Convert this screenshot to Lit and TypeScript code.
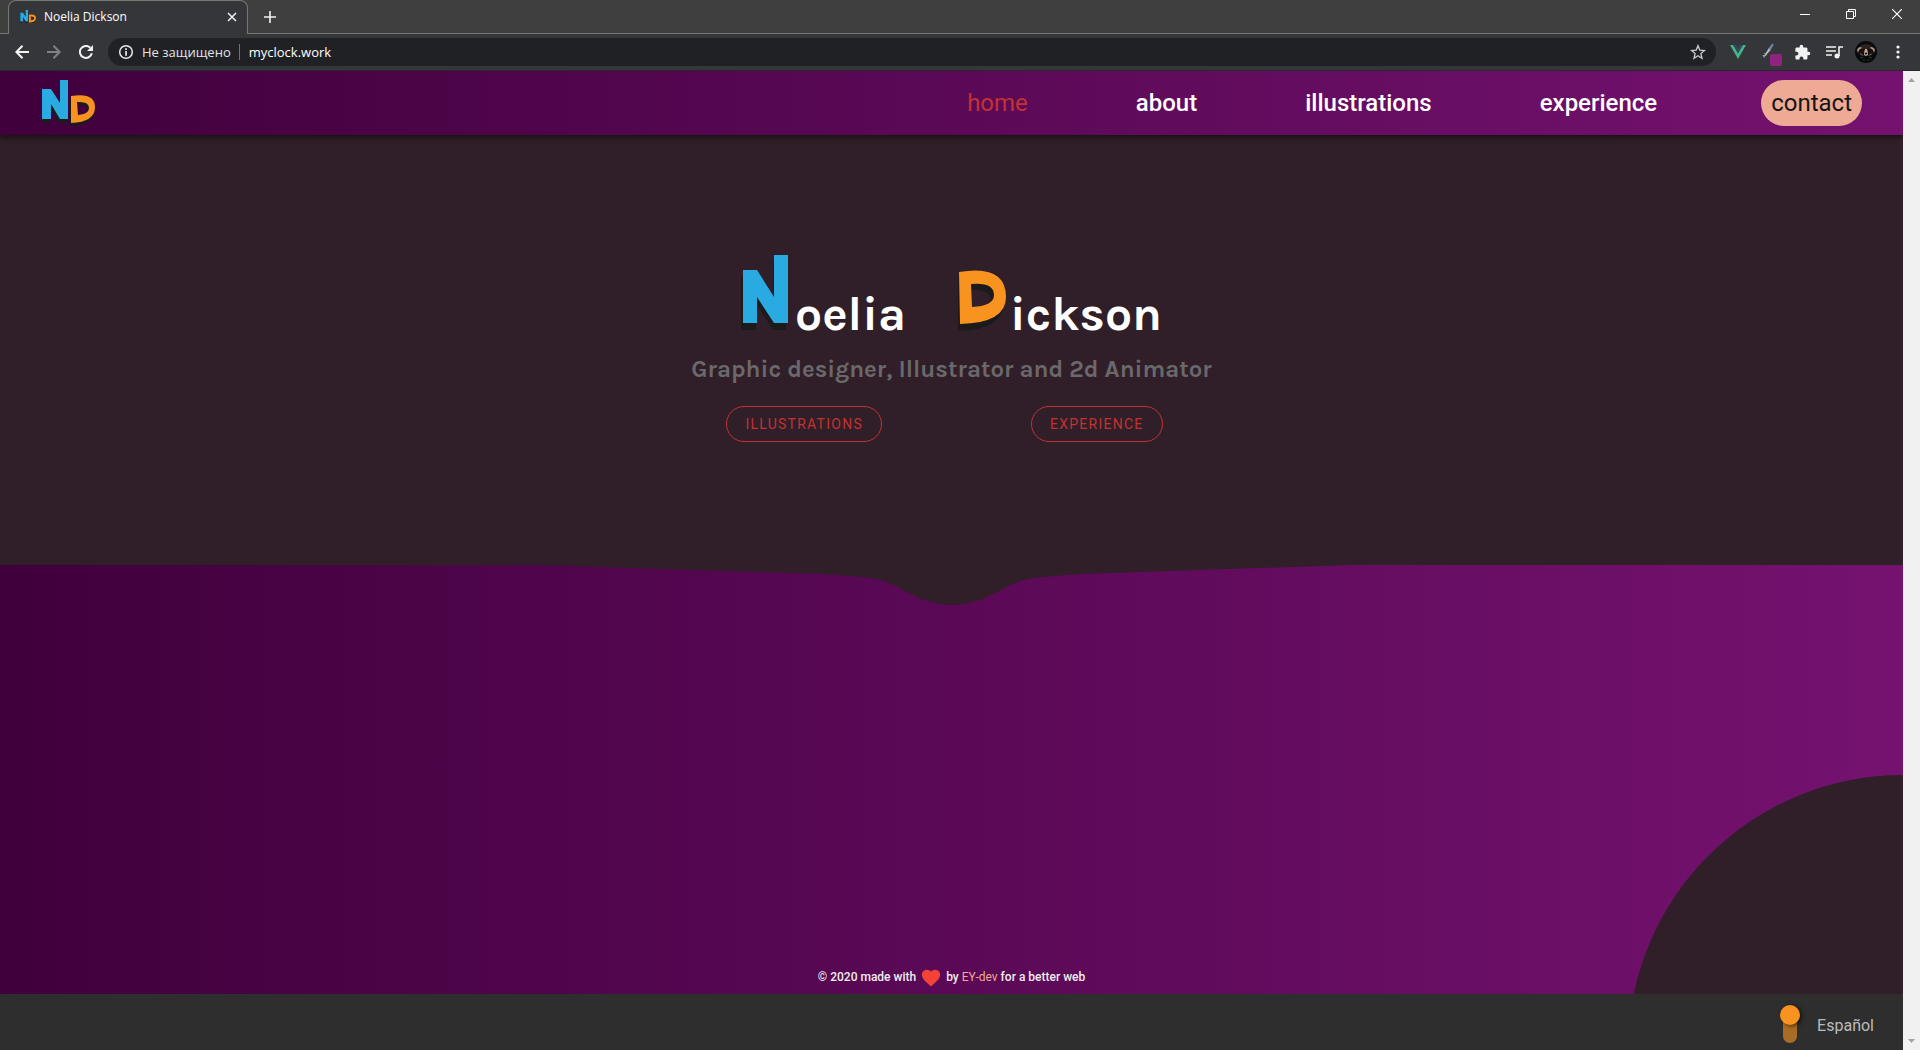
import { LitElement, html, css } from "lit";
import { customElement, property, state } from "lit/decorators.js";

@customElement("browser-chrome")
export class BrowserChrome extends LitElement {
  static styles = css`
    :host {
      display: block;
      font-family: "Open Sans", "Noto Sans", sans-serif;
      color: #fff;
    }
    button {
      border: 0;
      padding: 0;
      background: none;
      color: inherit;
      display: flex;
      align-items: center;
      justify-content: center;
    }
    svg {
      display: block;
    }
    .tabs {
      height: 34px;
      background: #3f3f3f;
      border-bottom: 1px solid #747873;
      box-sizing: border-box;
      display: flex;
      align-items: stretch;
      padding-left: 8px;
    }
    .tab {
      box-sizing: border-box;
      width: 240px;
      height: 34px;
      background: #35363a;
      border: 1px solid #747873;
      border-bottom: 0;
      border-radius: 8px 8px 0 0;
      display: flex;
      align-items: center;
      gap: 8px;
      padding: 0 10px 2px 11px;
      font-size: 12px;
    }
    .title {
      flex: 1;
    }
    .add {
      width: 44px;
    }
    .window {
      margin-left: auto;
      display: flex;
      height: 28px;
    }
    .window button {
      width: 46px;
    }
    .bar {
      height: 37px;
      box-sizing: border-box;
      background: #35363a;
      border-bottom: 1px solid #27282b;
      display: flex;
      align-items: center;
      padding: 0 6px;
    }
    .nav {
      width: 32px;
      height: 32px;
    }
    .address {
      flex: 1;
      height: 28px;
      margin: 0 6px;
      border-radius: 14px;
      background: #202124;
      display: flex;
      align-items: center;
      padding: 0 10px;
      font-size: 13px;
    }
    .secure {
      color: #e3e4e6;
      margin-left: 8px;
    }
    .rule {
      width: 1px;
      height: 16px;
      background: #707276;
      margin: 0 9px 0 8px;
    }
    .url {
      flex: 1;
      min-width: 0;
      border: 0;
      padding: 0;
      outline: 0;
      background: none;
      color: #fff;
      font: inherit;
    }
    .ext {
      width: 32px;
      height: 32px;
    }
  `;

  render() {
    return html`
      <div class="tabs">
        <div class="tab">
          <nd-logo size="16"></nd-logo>
          <span class="title">Noelia Dickson</span>
          <button aria-label="Close tab">
            <svg width="10" height="10" viewBox="0 0 10 10"><path d="M1 1l8 8M9 1l-8 8" stroke="#f1f3f4" stroke-width="1.500" /></svg>
          </button>
        </div>
        <button class="add" aria-label="New tab">
          <svg width="12" height="12" viewBox="0 0 12 12"><path d="M6 0v12M0 6h12" stroke="#f1f3f4" stroke-width="1.600" /></svg>
        </button>
        <div class="window">
          <button aria-label="Minimize"><svg width="10" height="10"><path d="M0 5.500h10" stroke="#fff" /></svg></button>
          <button aria-label="Restore">
            <svg width="10" height="10" fill="none" stroke="#fff"><path d="M.5 2.500h7v7h-7zM2.500 2V.5h7v7H8" /></svg>
          </button>
          <button aria-label="Close"><svg width="10" height="10"><path d="M0 0l10 10M10 0L0 10" stroke="#fff" stroke-width="1.200" /></svg></button>
        </div>
      </div>
      <div class="bar">
        <button class="nav" aria-label="Back">
          <svg width="14" height="14" viewBox="0 0 14 14" fill="none" stroke="#f1f3f4" stroke-width="2"><path d="M14 7H1.500M7.500.7L1.400 7l6.100 6.300" /></svg>
        </button>
        <button class="nav" aria-label="Forward">
          <svg width="14" height="14" viewBox="0 0 14 14" fill="none" stroke="#808185" stroke-width="2"><path d="M0 7h12.500M6.500.7L12.600 7l-6.100 6.300" /></svg>
        </button>
        <button class="nav" aria-label="Reload">
          <svg width="14" height="14" viewBox="0 0 14 14"><path d="M12.800 8.200A6 6 0 1 1 11.200 2.700" fill="none" stroke="#f1f3f4" stroke-width="2" /><path d="M14 0v6H8z" fill="#f1f3f4" /></svg>
        </button>
        <div class="address">
          <svg width="16" height="16" viewBox="0 0 16 16"><circle cx="8" cy="8" r="6.300" fill="none" stroke="#e8eaed" stroke-width="1.500" /><path d="M7.200 4.300h1.700V6H7.200zM7.200 7h1.700v4.700H7.200z" fill="#e8eaed" /></svg>
          <label class="secure" for="url">Не защищено</label>
          <span class="rule"></span>
          <input class="url" id="url" value="myclock.work" />
          <button aria-label="Bookmark">
            <svg width="16" height="16" viewBox="0 0 24 24"><path d="M12 2.500l2.700 6.600 7.100.6-5.400 4.700 1.600 7-6-3.700-6 3.700 1.600-7-5.400-4.700 7.100-.6z" fill="none" stroke="#c9cbce" stroke-width="2" /></svg>
          </button>
        </div>
        <button class="ext" aria-label="Vue devtools">
          <svg width="16" height="14" viewBox="0 0 16 14"><path d="M0 0h3.200L8 8.300 12.800 0H16L8 14z" fill="#41b883" /><path d="M3.200 0h3L8 3.200 9.800 0h3L8 8.300z" fill="#35495e" /></svg>
        </button>
        <button class="ext" aria-label="Color picker">
          <svg width="24" height="28" viewBox="0 0 24 28"><path d="M5.500 18.500L11 10l2 1.400L7 18.300z" fill="#b6c7d1" /><path d="M10 11l4.300-5.500 1.400 1-3.400 6z" fill="#7389a0" /><path d="M5 17l1.500 2.500" stroke="#7fd0d8" /><path d="M6.500 15.500l2 1.500" stroke="#e4b36a" /><rect x="12" y="16" width="12" height="12" rx="2" fill="#8e247f" /></svg>
        </button>
        <button class="ext" aria-label="Extensions">
          <svg width="17" height="17" viewBox="0 0 24 24"><path fill="#f1f3f4" d="M20.500 11H19V7c0-1.100-.9-2-2-2h-4V3.500a2.500 2.500 0 0 0-5 0V5H4c-1.100 0-2 .9-2 2v3.800h1.500a2.700 2.700 0 0 1 0 5.400H2V20c0 1.100.9 2 2 2h3.800v-1.500a2.700 2.700 0 0 1 5.400 0V22H17c1.100 0 2-.9 2-2v-4h1.500a2.500 2.500 0 0 0 0-5z" /></svg>
        </button>
        <button class="ext" aria-label="Media controls">
          <svg width="17" height="14" viewBox="0 0 17 14" fill="none" stroke="#f1f3f4" stroke-width="1.600"><path d="M0 2h10M0 6h10M0 10h6M13 11V2h4" /><circle cx="11" cy="11" r="1.700" fill="#f1f3f4" /></svg>
        </button>
        <button class="ext" aria-label="Profile">
          <svg width="22" height="22" viewBox="0 0 22 22">
            <circle cx="11" cy="11" r="11" fill="#090a0b" />
            <path d="M5 5q6-4 12 0l-2 3H7z" fill="#2b2320" />
            <path d="M2 9q1-3 4-3l1 1-3 2-1 3zM20 9q-1-3-4-3l-1 1 3 2 1 3z" fill="#b5937e" />
            <path d="M4 10l3-2 3 1-1 3-3 1zM18 10l-3-2-3 1 1 3 3 1z" fill="#171210" />
            <path d="M4 12l3 1 2 2-3-1zM18 12l-3 1-2 2 3-1z" fill="#7d6053" />
            <path d="M10 8h2l1 4 0 2-2 1-2-1 0-2z" fill="#c9aa98" />
            <ellipse cx="11" cy="12.500" rx="1.400" ry="1" fill="#17120f" />
            <path d="M5 17l3-1M17 17l-3-1M8 19h2M12 19h2" stroke="#22383a" />
          </svg>
        </button>
        <button class="ext" aria-label="Menu">
          <svg width="4" height="14" viewBox="0 0 4 14" fill="#f1f3f4"><circle cx="2" cy="2" r="1.600" /><circle cx="2" cy="7" r="1.600" /><circle cx="2" cy="12" r="1.600" /></svg>
        </button>
      </div>
    `;
  }
}

@customElement("nd-logo")
export class NdLogo extends LitElement {
  @property({ type: Number }) size = 54;

  static styles = css`
    :host {
      display: block;
      line-height: 0;
    }
  `;

  render() {
    return html`
      <svg width=${this.size} height=${(this.size * 46) / 54} viewBox="0 0 54 46" role="img" aria-label="ND">
        <g fill="#1b1b1b" transform="translate(-1 3)">
          <path d="M1 9h9l9 14V0h8v40h-8l-9-15v15H1z" />
          <path fill-rule="evenodd" d="M30 16q24-4 24 12 0 14-24 15zM36 22v14q12-1 12-8 0-7-12-6z" />
        </g>
        <path fill="#29abe2" d="M1 9h9l9 14V0h8v39h-8l-9-15v15H1z" />
        <path fill="#f7931e" fill-rule="evenodd" d="M30 16q24-4 24 11 0 15-24 16zM36 22l1 13q11-1 11-7 0-7-12-6z" />
      </svg>
    `;
  }
}

@customElement("app-root")
export class AppRoot extends LitElement {
  @state() private spanish = false;

  private links = ["home", "about", "illustrations", "experience"];

  static styles = css`
    :host {
      display: flex;
      flex-direction: column;
      min-height: 100vh;
      font-family: Roboto, sans-serif;
      background: #301f28;
    }
    a {
      color: inherit;
      text-decoration: none;
    }
    .view {
      flex: 1;
      display: flex;
    }
    .page {
      flex: 1;
      display: flex;
      flex-direction: column;
      overflow: hidden;
    }
    .scroll {
      width: 17px;
      background: #f1f1f1;
      display: flex;
      flex-direction: column;
      justify-content: space-between;
      align-items: center;
      padding: 7px 0;
      box-sizing: border-box;
    }
    .header {
      height: 64px;
      box-sizing: border-box;
      padding: 0 41px;
      background: linear-gradient(90deg, #40003c, #751270);
      box-shadow: 0 2px 6px rgba(0, 0, 0, 0.6);
      display: flex;
      align-items: center;
      justify-content: space-between;
      position: relative;
    }
    .menu {
      display: flex;
      align-items: center;
      gap: 108px;
      font-size: 24px;
      font-weight: 500;
      color: #fff;
    }
    .active {
      font-weight: 400;
      color: #c23232;
    }
    .contact {
      font-weight: 400;
      color: #151515;
      background: #eeaa94;
      border-radius: 23px;
      line-height: 46px;
      padding: 0 10px;
      margin-left: -4px;
    }
    .hero {
      height: 430px;
      box-sizing: border-box;
      padding-top: 120px;
      display: flex;
      flex-direction: column;
      align-items: center;
    }
    .name {
      margin: 0;
      display: flex;
      gap: 52px;
      font: 700 48px/60px "Karla", "Noto Sans", sans-serif;
      color: #fff;
    }
    .word {
      display: flex;
      align-items: flex-end;
      height: 89px;
    }
    .word svg {
      margin-bottom: 13px;
    }
    .tagline {
      margin: 11px 0 0;
      font: 700 24px/28px "Karla", "Noto Sans", sans-serif;
      color: #6b686b;
    }
    .actions {
      margin: 23px 14px 0 0;
      display: flex;
      gap: 149px;
    }
    .pill {
      height: 36px;
      box-sizing: border-box;
      border: 1px solid #c23232;
      border-radius: 18px;
      padding: 0 18px;
      background: none;
      color: #c23232;
      font: 400 14px/20px Roboto, sans-serif;
      letter-spacing: 0.09em;
    }
    .lower {
      flex: 1;
      position: relative;
      overflow: hidden;
      display: flex;
      flex-direction: column;
      align-items: center;
      justify-content: space-between;
      background: linear-gradient(90deg, #40003c, #751270);
    }
    .wave {
      display: block;
      width: 100%;
      height: 40px;
    }
    .circle {
      position: absolute;
      right: -275px;
      top: 210px;
      width: 550px;
      height: 550px;
      border-radius: 50%;
      background: #301f28;
    }
    .credit {
      margin: 0 0 5px;
      display: flex;
      align-items: center;
      gap: 4px;
      font-size: 12px;
      line-height: 24px;
      font-weight: 500;
      color: #eee;
    }
    .credit svg {
      position: relative;
      top: 1px;
    }
    .dev {
      color: #eeaa94;
      font-weight: 400;
    }
    .footer {
      height: 56px;
      box-sizing: border-box;
      background: #2e2e2e;
      display: flex;
      align-items: flex-start;
      justify-content: flex-end;
      gap: 17px;
      padding: 11px 29px 0 0;
      font-size: 16px;
      color: #bbb;
    }
    .switch {
      appearance: none;
      margin: 0;
      width: 20px;
      height: 38px;
      display: grid;
      justify-items: center;
    }
    .switch::before,
    .switch::after {
      content: "";
      grid-area: 1 / 1;
    }
    .switch::before {
      width: 14px;
      height: 28px;
      align-self: end;
      border-radius: 7px;
      background: #a96c24;
    }
    .switch::after {
      width: 20px;
      height: 20px;
      align-self: start;
      border-radius: 50%;
      background: #f7931e;
      box-shadow: 2px 1px 4px rgba(0, 0, 0, 0.6);
    }
    .switch:checked::after {
      align-self: end;
    }
    .lang {
      line-height: 20px;
      padding-top: 11px;
    }
  `;

  render() {
    return html`
      <browser-chrome></browser-chrome>
      <div class="view">
        <div class="page">
          <header class="header">
            <a href="#home" aria-label="Noelia Dickson"><nd-logo size="54"></nd-logo></a>
            <nav class="menu">
              ${this.links.map((l) => html`<a class=${l === "home" ? "active" : ""} href="#${l}">${l}</a>`)}
              <a class="contact" href="#contact">contact</a>
            </nav>
          </header>
          <section class="hero">
            <h1 class="name">
              <span class="word">
                <svg width="54" height="76" viewBox="0 0 54 76" role="img" aria-label="N">
                  <path fill="#1b1b1b" d="M0 22h15l17 27V7h13v68H32L15 48v27H0z" />
                  <path fill="#29abe2" d="M2 15h14l17 27V0h14v68H33L16 42v26H2z" />
                </svg>oelia</span>
              <span class="word">
                <svg width="52" height="61" viewBox="0 0 52 61" role="img" aria-label="D">
                  <path fill="#1b1b1b" fill-rule="evenodd" d="M0 8Q46 0 46 32 46 60 0 61zM11 20v23q22-1 22-12 0-13-22-11z" />
                  <path fill="#f7931e" fill-rule="evenodd" d="M1 2q47-8 47 25 0 26-46 27zM13 14l1 23q22-1 22-12 0-13-23-11z" />
                </svg>ickson</span>
            </h1>
            <p class="tagline">Graphic designer, Illustrator and 2d Animator</p>
            <div class="actions">
              <button class="pill">ILLUSTRATIONS</button>
              <button class="pill">EXPERIENCE</button>
            </div>
          </section>
          <section class="lower">
            <svg class="wave" viewBox="0 0 1903 40" preserveAspectRatio="none">
              <path fill="#301f28" d="M540 0L822 9Q872 12 884 16 893 19 903 25L919 33Q936 40 952 40T985 33L1001 25Q1011 19 1020 16 1032 12 1082 9L1350 0z" />
            </svg>
            <div class="circle"></div>
            <p class="credit">
              <span>© 2020 made with</span>
              <svg width="22" height="22" viewBox="0 0 24 24" role="img" aria-label="love"><path fill="#f44336" d="M12 21.350l-1.450-1.320C5.400 15.360 2 12.280 2 8.500 2 5.420 4.420 3 7.500 3c1.740 0 3.410.81 4.500 2.090C13.090 3.810 14.760 3 16.500 3 19.580 3 22 5.420 22 8.500c0 3.780-3.400 6.860-8.550 11.540z" /></svg>
              <span>by <a class="dev" href="#dev">EY-dev</a> for a better web</span>
            </p>
          </section>
          <footer class="footer">
            <input class="switch" id="lang" type="checkbox" role="switch" .checked=${this.spanish}
              @change=${(e: Event) => (this.spanish = (e.target as HTMLInputElement).checked)} />
            <label class="lang" for="lang">Español</label>
          </footer>
        </div>
        <div class="scroll" aria-hidden="true">
          <svg width="7" height="4"><path d="M3.500 0L7 4H0z" fill="#a3a3a3" /></svg>
          <svg width="7" height="4"><path d="M0 0h7L3.500 4z" fill="#a3a3a3" /></svg>
        </div>
      </div>
    `;
  }
}
